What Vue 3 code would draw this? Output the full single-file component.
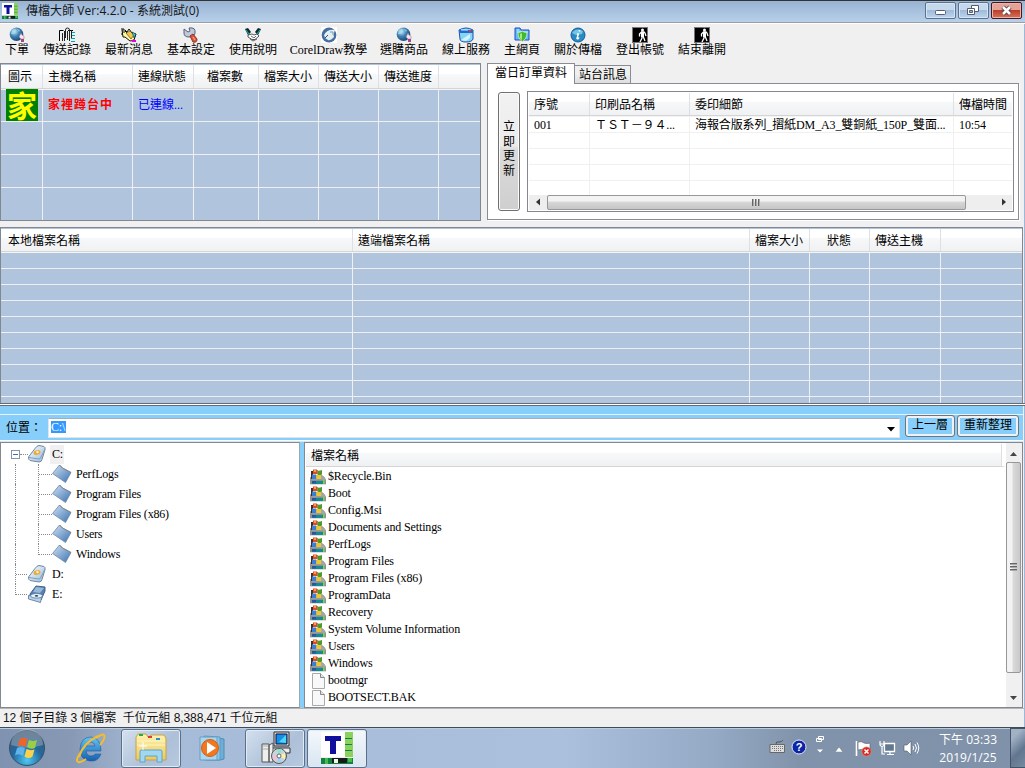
<script setup>
const tools = [
  ['下單', 'globe', 24], ['傳送記錄', 'clip', 48], ['最新消息', 'news', 48], ['基本設定', 'wrench', 48],
  ['使用說明', 'hands', 48], ['CorelDraw教學', 'corel', 75], ['選購商品', 'globe', 48], ['線上服務', 'bucket', 48],
  ['主網頁', 'shield', 36], ['關於傳檔', 'info', 48], ['登出帳號', 'exit', 48], ['結束離開', 'exit', 48]
]
const hostHeads = ['圖示', '主機名稱', '連線狀態', '檔案數', '檔案大小', '傳送大小', '傳送進度', '']
const orderHeads = ['序號', '印刷品名稱', '委印細節', '傳檔時間']
const orderRow = ['001', 'ＴＳＴ－９４...', '海報合版系列_摺紙DM_A3_雙銅紙_150P_雙面...', '10:54']
const queueHeads = ['本地檔案名稱', '遠端檔案名稱', '檔案大小', '狀態', '傳送主機', '']
const folders = ['PerfLogs', 'Program Files', 'Program Files (x86)', 'Users', 'Windows']
const files = ['$Recycle.Bin', 'Boot', 'Config.Msi', 'Documents and Settings', 'PerfLogs', 'Program Files',
  'Program Files (x86)', 'ProgramData', 'Recovery', 'System Volume Information', 'Users', 'Windows', 'bootmgr', 'BOOTSECT.BAK']
</script>

<template>
  <div class="win">
    <svg class="defs" width="0" height="0">
      <defs>
        <radialGradient id="gGlobe" cx=".35" cy=".3" r=".8"><stop offset="0" stop-color="#c9ecfa" /><stop offset=".45" stop-color="#3f82b4" /><stop offset="1" stop-color="#123a68" /></radialGradient>
        <linearGradient id="gFolder" x1="0" y1="0" x2="1" y2="1"><stop offset="0" stop-color="#d3e2f2" /><stop offset="1" stop-color="#3a72b2" /></linearGradient>
        <linearGradient id="gDrive" x1="0" y1="0" x2="1" y2="1"><stop offset="0" stop-color="#ffffff" /><stop offset="1" stop-color="#93bbdf" /></linearGradient>
        <radialGradient id="gOrb" cx=".5" cy=".85" r=".85"><stop offset="0" stop-color="#4cc8f2" /><stop offset=".5" stop-color="#23689c" /><stop offset="1" stop-color="#46586e" /></radialGradient>
        <linearGradient id="gIe" x1="0" y1="0" x2="0" y2="1"><stop offset="0" stop-color="#63c4f4" /><stop offset="1" stop-color="#155faf" /></linearGradient>
        <linearGradient id="gYellow" x1="0" y1="0" x2="0" y2="1"><stop offset="0" stop-color="#fff3b0" /><stop offset="1" stop-color="#e9c964" /></linearGradient>
      </defs>
      <symbol id="globe" viewBox="0 0 16 16"><circle cx="7.500" cy="7.300" r="6.800" fill="url(#gGlobe)" /><path d="M3 3l3-1 1 2-2 3-3 0zM8 2l3 1-1 2z" fill="#a7dced" opacity=".7" /><path d="M11 8l1-2 1 2 2 1 0 3-3 0-2-2z" fill="#f7e7ed" stroke="#8a6b94" stroke-width=".5" /><path d="M12 12h3v3h-3z" fill="#a0487f" /></symbol>
      <symbol id="clip" viewBox="0 0 16 16"><path d="M.5 14V3.500h4M9 3.500h5" stroke="#000" fill="none" /><path d="M12 5.500h4M12 8.500h4M12 11.500h4M12 14.500h4" stroke="#00a6b8" /><path d="M3.500 14V6M10.500 14V3q0-2-2-2t-2 2v8M5.500 14V4M8.500 4v9M12.500 3v8" stroke="#222" fill="none" /></symbol>
      <symbol id="news" viewBox="0 0 16 16"><path d="M1 3h3l2 2 2-3 3 4 4 1-2 6-4 1-5-4-2 0z" fill="#fff9a0" stroke="#111" /><path d="M0 2h3M1 5h3M0 7h2M4 4l6 6" stroke="#111" /><path d="M5 6l4-2 4 4-3 4z" fill="#f9c44b" stroke="#333" stroke-width=".6" /><path d="M11 5l4 2-2 4z" fill="#21ddd9" stroke="#111" stroke-width=".5" /><path d="M10 13h5v2h-4z" fill="#e300dc" /></symbol>
      <symbol id="wrench" viewBox="0 0 16 16"><path d="M1 2l4 3 2-1-1-3q7-1 6 5 0 2-2 3l-4 1Q1 10 1 6z" fill="#bfc9da" stroke="#545e7b" /><path d="M7 9l3-2 4 5q0 4-4 3z" fill="#d95a38" stroke="#902d23" /><path d="M10 10l2 3" stroke="#ffb398" /></symbol>
      <symbol id="hands" viewBox="0 0 16 16"><path d="M0 2l3-1 3 4-3 3zM16 2l-3-1-3 4 3 3z" fill="#172326" /><path d="M1 3l3 4M15 3l-3 4" stroke="#00b0b0" stroke-width="1.200" /><path d="M3 8l4-1 2 1 3-1 2 2-4 3.500H7L3 10z" fill="#fff" stroke="#111" stroke-width=".7" /><path d="M6 9l3 2 2-2M5 12l3 2 4-2" stroke="#444" stroke-width=".8" fill="none" /></symbol>
      <symbol id="corel" viewBox="0 0 16 16"><rect width="16" height="16" fill="#fff" /><circle cx="8" cy="8" r="7.400" fill="#456e9e" /><path d="M3 8Q6 2 14 3q-2 5-1 7-4 4-6 3l-3-2z" fill="#e4eff3" /><path d="M9 5h3v3" stroke="#7899b5" fill="none" /><path d="M4 11l3-3" stroke="#274f80" fill="none" /></symbol>
      <symbol id="bucket" viewBox="0 0 16 16"><path d="M1 3q7-4 14 0v9q-1 3-7 3-6 0-6-3z" fill="#86d6f2" stroke="#1b50b7" /><path d="M1 3h14v3H2z" fill="#1f6ad0" /><path d="M3 3h7" stroke="#bceeff" /><path d="M10 3l4 0-2 3z" fill="#b34b47" /><path d="M3 13L12 7v4l-4 3z" fill="#e3fbff" opacity=".8" /></symbol>
      <symbol id="shield" viewBox="0 0 16 16"><path d="M1 1h5l1 2h8v10H1z" fill="#60bdf8" stroke="#1b4bc7" /><path d="M3 3h2M3 5h11" stroke="#cdf4ff" /><path d="M4 5.500q4-.5 4-1.500 2 1.500 5 1.500 0 6-4.500 9Q4 12 4 5.500z" fill="#40ba2d" stroke="#cfe9d0" stroke-width=".8" /><path d="M6 7v4l2 2V6z" fill="#a9ea78" /></symbol>
      <symbol id="info" viewBox="0 0 16 16"><circle cx="8" cy="8" r="7" fill="#288bc2" stroke="#1559a2" /><path d="M2 6Q6 0 13 4l-1 3-6 1z" fill="#73c6e3" /><path d="M8.500 6.500l-1.500 5q1 1 2-1M7 7h1.500M9.500 3v1.500" stroke="#fff" stroke-width="1.500" fill="none" /></symbol>
      <symbol id="exit" viewBox="0 0 16 16"><rect x=".5" y=".5" width="15" height="15" fill="#000" stroke="#777" /><circle cx="10.500" cy="3" r="1.500" fill="#fff" /><path d="M9 5h3l1 1 1 3M9.500 5l-2 2v2.500M10 9v2l-2 4M11 9l2 5" fill="none" stroke="#fff" stroke-width="1.300" /><path d="M9 5h3v5H9z" fill="#fff" /></symbol>
      <symbol id="tlogo" viewBox="0 0 32 32"><rect width="32" height="32" fill="#138044" /><rect y="0" width="24" height="25" fill="#fff" /><path d="M24 0h8v25h-8z" fill="#8bd15e" /><path d="M24 6.500h7M24 12.500h7M24 18.500h7" stroke="#138044" /><path d="M4 4h16v5h-5v13H9V9H4z" fill="#10109c" /><path d="M0 25h32v1H0z" fill="#eee" /><path d="M4 26h3v6H4zM27 26h4v4h-4z" fill="#46bb4c" /><path d="M11 26h15v5H11z" fill="#151b18" /><path d="M13 27h4v4h-4z" fill="#f4f7e8" /></symbol>
      <symbol id="folder" viewBox="0 0 20 20"><path d="M.5 9.500L7.500 1l3 3 8.500 4.500-5.500 10z" fill="url(#gFolder)" stroke="#6a86a5" stroke-width=".8" /><path d="M7.500 1l3 3 8.500 4.500" stroke="#7d8790" fill="none" /></symbol>
      <symbol id="drive" viewBox="0 0 18 18"><path d="M.5 12L7 3.500Q9 .5 11 .5l5 1q1.500.5 1 3l-3 10q-.5 2.500-3 2.500L2 15.500Q.5 15 .5 12z" fill="url(#gDrive)" stroke="#74879d" /><path d="M1 12.500l10 1.500q1.500 0 2-2l4-8" stroke="#7d9fbe" fill="none" /><ellipse cx="9" cy="7.500" rx="3.600" ry="2.400" fill="#edaa3c" transform="rotate(-15 9 7.500)" /><circle cx="9.500" cy="7" r="1.200" fill="#fff5d0" /></symbol>
      <symbol id="cd" viewBox="0 0 18 18"><path d="M2 9L8 1l9 1v4l-4 9-11-3z" fill="#587fae" stroke="#3e638e" /><path d="M8 2l8 1-4 5-7-1z" fill="#98b9d8" /><path d="M.5 10.500l13 2-1 5-12-3.500z" fill="#b9d3e8" stroke="#557599" stroke-width=".8" /><ellipse cx="8.500" cy="10.800" rx="6" ry="2.300" fill="#e6f2f9" stroke="#587b9f" stroke-width=".8" /><ellipse cx="8.500" cy="10.800" rx="1.800" ry=".9" fill="#24486e" /></symbol>
      <symbol id="windir" viewBox="0 0 16 16"><path d="M0 11V9q2-3 8-3 5 0 6 2l2 3v4H0z" fill="#a5a9a8" stroke="#777" stroke-width=".5" /><path d="M1 2h2v8H1zM6 1h1.500v4H6z" fill="#333" /><path d="M3 .5h4V5H3z" fill="#e8481a" /><path d="M4 1h2v2H4z" fill="#ff9a55" /><path d="M7.500 1.500q2 .5 4.500-.5v4.500q-2.500 1-4.500 0z" fill="#4f9a2b" /><path d="M2 5.500h4V10H2z" fill="#3a7fd2" /><path d="M6.500 6H11v4H6.500z" fill="#efc62b" /><path d="M0 10.500h12l4 1V15H0z" fill="#8d9191" /><path d="M2 12h11v3H2z" fill="#178b95" /><path d="M2 12h4v2.500H2z" fill="#2a56a0" /><path d="M13 11h1.500v4H13z" fill="#7fd63c" /></symbol>
      <symbol id="file" viewBox="0 0 16 16"><path d="M2.500.5h8l4 4v11h-12z" fill="#f8f8f8" stroke="#aaa" /><path d="M10.500.5v4h4" fill="#e4e4e4" stroke="#888" /></symbol>
    </svg>

    <header class="title">
      <svg class="s16"><use href="#tlogo" /></svg>
      <span class="caption">傳檔大師 Ver:4.2.0 - 系統測試(0)</span>
      <div class="ctrls">
        <b><svg viewBox="0 0 29 15"><rect x="9.500" y="7.500" width="10" height="4" rx="1" fill="#fff" stroke="#555d70" /></svg></b>
        <b><svg viewBox="0 0 29 15"><path d="M12.500 2.500h7v6h-7z" fill="#fff" stroke="#555d70" /><path d="M8.500 5.500h7v6h-7z" fill="#fff" stroke="#555d70" /><path d="M10.500 7.500h3v2h-3z" fill="#9bb" stroke="#555d70" /></svg></b>
        <b class="close"><svg viewBox="0 0 29 15"><path d="M11 4l7 7M18 4l-7 7" stroke="#53454f" stroke-width="4.500" /><path d="M11 4l7 7M18 4l-7 7" stroke="#fff" stroke-width="2.500" /></svg></b>
      </div>
    </header>

    <nav class="tools">
      <div v-for="(t, i) in tools" :key="i" class="tool" :style="{ width: t[2] + 'px' }">
        <svg class="s16"><use :href="'#' + t[1]" /></svg><span>{{ t[0] }}</span>
      </div>
    </nav>

    <section class="top">
      <div class="hosts">
        <div class="head hostgrid"><span v-for="(h, i) in hostHeads" :key="i">{{ h }}</span></div>
        <div v-for="r in 4" :key="r" class="hrow hostgrid">
          <template v-if="r === 1"><span class="pic"><i>家</i></span><span class="hname">家裡蹲台中</span><span class="hstat">已連線...</span><span v-for="n in 5" :key="n"></span></template>
          <template v-else><span v-for="n in 8" :key="n"></span></template>
        </div>
      </div>

      <div class="tabs">
        <div class="tabbar"><span class="tab on">當日訂單資料</span><span class="tab">站台訊息</span></div>
        <div class="panel">
          <button class="refresh"><span v-for="c in '立即更新'" :key="c">{{ c }}</span></button>
          <div class="orders">
            <div class="head ogrid"><span v-for="h in orderHeads" :key="h">{{ h }}</span></div>
            <div v-for="r in 5" :key="r" class="orow ogrid"><span v-for="(c, i) in orderRow" :key="i">{{ r === 1 ? c : '' }}</span></div>
            <div class="hscroll"><svg width="18" height="14"><path d="M11 3.500v7L7 7z" fill="#333" /></svg><div class="hthumb"><i class="grip"></i></div><svg width="18" height="14"><path d="M6 3.500v7L10 7z" fill="#333" /></svg></div>
          </div>
        </div>
      </div>
    </section>

    <section class="queue">
      <div class="head qgrid"><span v-for="(h, i) in queueHeads" :key="i">{{ h }}</span></div>
      <div v-for="r in 10" :key="r" class="qrow qgrid"><span v-for="n in 6" :key="n"></span></div>
    </section>
    <div class="splitter"></div>

    <section class="addr">
      <label>位置：</label>
      <div class="combo"><span class="sel">C:\</span><svg width="8" height="5"><path d="M0 0h8L4 4.500z" /></svg></div>
      <button class="abtn up"><span>上一層</span></button>
      <button class="abtn re"><span>重新整理</span></button>
    </section>

    <section class="browse">
      <div class="tree">
        <div class="node root"><i class="box"></i><i class="dots"></i><svg class="dr"><use href="#drive" /></svg><span class="cur">C:</span></div>
        <div v-for="(f, i) in folders" :key="f" class="node kid" :class="{ last: i === 4 }"><i class="trunk"></i><i class="branch"></i><svg class="fo"><use href="#folder" /></svg><span>{{ f }}</span></div>
        <div class="node drv"><i class="branch"></i><svg class="dr"><use href="#drive" /></svg><span>D:</span></div>
        <div class="node drv last"><i class="branch"></i><svg class="dr"><use href="#cd" /></svg><span>E:</span></div>
      </div>
      <div class="list">
        <div class="lmain">
          <div class="head lhead"><span>檔案名稱</span></div>
          <div v-for="(f, i) in files" :key="f" class="frow"><svg class="s16"><use :href="i < 12 ? '#windir' : '#file'" /></svg><span>{{ f }}</span></div>
        </div>
        <div class="vscroll"><svg width="15" height="17"><path d="M4 11h7L7.500 7z" fill="#444" /></svg><div class="vthumb"><i class="vgrip"></i></div><svg class="dn" width="15" height="17"><path d="M4 7h7l-3.500 4z" fill="#444" /></svg></div>
      </div>
    </section>

    <footer class="status">12 個子目錄 3 個檔案&nbsp; 千位元組 8,388,471 千位元組</footer>

    <div class="taskbar">
      <div class="slot orb"><svg width="38" height="38" viewBox="0 0 38 38"><circle cx="19" cy="19" r="17.500" fill="url(#gOrb)" stroke="#31516d" /><path d="M3 16a16 16 0 0132 0q-16 5-32 0z" fill="#fff" opacity=".25" /><path d="M11.500 10.500q4-3 8-.5l-2 8q-4-2.500-8-.5z" fill="#f0642c" /><path d="M21 11q4 2 8 0l-2 8q-4 2-8-1z" fill="#9bcf43" /><path d="M9 19q4-2 8 0l-2 8q-4-3-8-.5z" fill="#5fb4ec" /><path d="M18.500 20q4 2 8 .500l-2 7q-4 3-8 0z" fill="#fbd24a" /></svg></div>
      <div class="slot ie"><svg width="32" height="32" viewBox="0 0 32 32"><path d="M27 19H12q1 5 5 5 3 0 4-2h6q-3 8-11 7Q6 28 6 17 7 5 17 5q10 1 10 14zM12 14h9q-1-4-4-4-4 0-5 4z" fill="url(#gIe)" stroke="#1c5c9d" stroke-width=".6" fill-rule="evenodd" /><path d="M22 6q7-5 8-3 2 3-4 10M7 20q-6 8-3 10 2 1 8-3M5 25Q9 11 24 4" stroke="#f3bd2f" stroke-width="2" fill="none" /></svg></div>
      <div class="slot on"><svg width="34" height="34" viewBox="0 0 34 34"><path d="M2 6l2-3h8l2 3h2l1-2h13l2 3v22H2z" fill="url(#gYellow)" stroke="#c8a343" /><path d="M3 10h28M3 14h28" stroke="#fff5bf" /><path d="M5 3h4v2H5z" fill="#26a84c" /><path d="M14 5h4v2h-4z" fill="#d64034" /><path d="M22 7h4v2h-4z" fill="#338bd5" /><path d="M6 31V20q0-1 2-1h18q2 0 2 1v11h-5v-6H11v6z" fill="#a2d7ef" stroke="#5aa4cc" /><path d="M9 11v8M5 15h8" stroke="#fff" /></svg></div>
      <div class="slot wmp"><svg width="30" height="30" viewBox="0 0 30 30"><path d="M9 4l17 2v20l-4 1H9z" fill="#70afd5" stroke="#4e8cb7" /><path d="M6 3l16 1v23H6z" fill="#8cc7e9" stroke="#5a9ac5" /><path d="M2 4h17v23H2z" fill="#a8d7ef" stroke="#669fc6" /><circle cx="12" cy="15" r="8.500" fill="#ef7821" stroke="#d85c12" /><path d="M9 9l9 6-9 6z" fill="#fff" /></svg></div>
      <div class="slot on inst"><svg width="34" height="34" viewBox="0 0 34 34"><path d="M16 1h15v14H16z" fill="#dadada" stroke="#333" /><path d="M18 3h11v10H18z" fill="#168ee5" stroke="#114" /><path d="M21 11l7-7v8z" fill="#49d8f5" /><path d="M12 17h20v5H12z" fill="#ececec" stroke="#333" /><path d="M4 13h7v18H4zM11 14l4-2v19h-4z" fill="#eee" stroke="#555" /><path d="M5 15h5M5 18h5" stroke="#aaa" /><circle cx="21" cy="25" r="7.500" fill="#c8d5da" stroke="#555" /><path d="M21 25l-2-7h5z" fill="#8ae4c8" /><path d="M21 25l6-3v6z" fill="#fff3a0" /><path d="M21 25l-5 5-1-6z" fill="#f7bdd7" /><path d="M21 25l3 6h-5z" fill="#9ecfff" /><circle cx="21" cy="25" r="2" fill="#fff" stroke="#666" /></svg></div>
      <div class="slot on app"><svg width="32" height="32"><use href="#tlogo" /></svg></div>
      <div class="tray">
        <svg class="kb" width="16" height="15" viewBox="0 0 16 15"><path d="M1 5.500h14.500v8H1z" fill="#ddd" stroke="#686868" /><path d="M3 7.500h11M3 9.500h11M5 11.500h7" stroke="#777" stroke-dasharray="1 1" /><path d="M7 5q0-3 3-2 3 0 4-2" fill="none" stroke="#555" /></svg>
        <svg class="help" width="16" height="16" viewBox="0 0 16 16"><circle cx="8" cy="8" r="7" fill="#0b24a8" stroke="#dfe5f5" /><text x="8" y="12" text-anchor="middle" fill="#fff" font-size="11" font-weight="700">?</text></svg>
        <svg class="mini" width="9" height="18" viewBox="0 0 9 18"><path d="M2.500.5h5v3h-5zM.5 2.500h5v3h-5z" fill="#8194aa" stroke="#fff" /><path d="M1 13.500h6l-3 3z" fill="#fff" /></svg>
        <svg class="arr" width="8" height="5"><path d="M0 5h8L4 0z" fill="#fff" stroke="#546478" stroke-width=".4" /></svg>
        <svg class="flag" width="17" height="17" viewBox="0 0 17 17"><path d="M1.500 1v15" stroke="#fff" stroke-width="1.600" /><path d="M3 2q4-1 6 1 3 1 6 0v7q-4 1-6 0-3-1-6 0z" fill="#fff" stroke="#556" stroke-width=".6" /><circle cx="11.500" cy="11.500" r="4.600" fill="#d62b20" stroke="#e98880" stroke-width=".6" /><path d="M9.500 9.500l4 4M13.500 9.500l-4 4" stroke="#fff" stroke-width="1.500" /></svg>
        <svg class="net" width="17" height="16" viewBox="0 0 17 16"><path d="M5.500 3.500h10v8h-10z" fill="#61788f" stroke="#fff" stroke-width="1.300" /><path d="M8 14.500h7M11 12v2M3 7v7h3M1 1v4q2 3 4 0V1M1 4h4" stroke="#fff" stroke-width="1.200" fill="none" /></svg>
        <svg class="vol" width="17" height="16" viewBox="0 0 17 16"><path d="M1 5h3l4-4v14l-4-4H1z" fill="#fff" stroke="#4c5c70" stroke-width=".6" /><path d="M10 6q1.500 2 0 4M12 4q3 4 0 8M14 2.500q3.500 5.500 0 11" stroke="#fff" fill="none" /></svg>
        <div class="clock"><span>下午 03:33</span><span>2019/1/25</span></div>
      </div>
      <div class="desk"></div>
    </div>
  </div>
</template>

<style>
body { margin: 0; overflow: hidden; }
</style>

<style scoped>
* { box-sizing: border-box; }
.win { width: 1025px; height: 768px; background: #f0f0f0; font: 12px/14px "Liberation Serif", "Noto Sans CJK TC", serif; color: #000; display: flex; flex-direction: column; overflow: hidden; white-space: pre; box-shadow: inset -1px 0 #9db8d6; }
.defs { position: absolute; }
svg { display: block; flex: none; }
.s16 { width: 16px; height: 16px; }
.title { flex: none; height: 24px; background: linear-gradient(#98b4d3, #b9d1ea); border-top: 1px solid #333; border-bottom: 1px solid #fff; box-shadow: inset 0 -1px #9a9fa7; display: flex; align-items: center; padding: 0 3px 2px 2px; }
.caption { font: 12px/16px "Open Sans", "Noto Sans CJK TC", sans-serif; margin-left: 8px; color: #15181c; flex: 1; letter-spacing: .05px; }
.ctrls { display: flex; gap: 2px; align-self: flex-start; padding-top: 1px; }
.ctrls b { width: 31px; height: 17px; border: 1px solid #5b7190; border-radius: 2px; background: linear-gradient(#c5d8ec 45%, #9fbbda 50%, #bed5ee); box-shadow: inset 0 0 0 1px #d6e5f4; }
.ctrls svg { width: 29px; height: 15px; }
.ctrls .close { border-color: #4b1420; background: linear-gradient(#e4a396 45%, #bd3f29 50%, #d4735c); box-shadow: inset 0 0 0 1px #eab5aa; }
.tools { flex: none; height: 39px; display: flex; gap: 14px; padding: 3px 0 0 5px; }
.tool { display: flex; flex-direction: column; align-items: center; line-height: 14px; }
.top { flex: none; height: 164px; display: flex; gap: 6px; }
.hosts { width: 481px; height: 158px; border: 1px solid #828790; background: #b0c4de; padding-top: 1px; overflow: hidden; }
.head { background: linear-gradient(#fff 38%, #f7f8fa 42%, #f0f1f3); border-bottom: 1px solid #d5d5d5; box-shadow: 0 1px #f4f4f4; }
.head span { border-right: 1px solid #dfe0e3; line-height: 25px; padding-left: 6px; }
.hostgrid { display: grid; grid-template-columns: 42px 90px 61px 65px 60px 60px 60px 1fr; }
.hosts .head { height: 24px; }
.hosts .head span { height: 23px; padding-left: 5px; }
.hosts .head span:nth-child(1) { padding-left: 7px; }
.hosts .head span:nth-child(4) { padding-left: 13px; }
.hosts .head span:last-child, .queue .head span:last-child, .orders .head span:last-child { border: 0; }
.hrow { height: 33px; border-bottom: 1px solid #f0f0f0; }
.hrow:last-child { border: 0; }
.hrow span { border-right: 1px solid #f0f0f0; line-height: 32px; padding-left: 5px; }
.hrow span:last-child, .qrow span:last-child, .orow span:last-child { border-right: 0; }
.hrow .hname { color: #f00; font-weight: 700; letter-spacing: 1px; }
.hrow .hstat { color: #00f; }
.pic i { display: block; width: 32px; height: 32px; background: #008000; color: #ff0; font: 700 30px/31px "Noto Sans CJK TC", sans-serif; text-align: center; }
.tabs { width: 532px; display: flex; flex-direction: column; }
.tabbar { height: 20px; display: flex; align-items: flex-end; }
.tab { height: 18px; border: 1px solid #898c95; border-left: 0; border-bottom: 0; background: linear-gradient(#f0f0f0 45%, #ddd); padding: 0 4px; line-height: 18px; width: 56px; }
.tab.on { height: 21px; margin-bottom: -1px; width: 88px; border-left: 1px solid #898c95; background: #fff; padding-left: 7px; line-height: 18px; z-index: 1; position: relative; }
.panel { height: 137px; border: 1px solid #898c95; background: #fff; box-shadow: 1px 1px #fff; padding: 7px 4px 7px 10px; display: flex; gap: 7px; }
.refresh { width: 22px; height: 119px; margin-top: 1px; border: 1px solid #707070; border-radius: 3px; background: linear-gradient(#f2f2f2, #ebebeb 45%, #dbdbdb 48%, #cfcfcf); box-shadow: inset 0 0 0 1px #fafafa; padding: 0 0 5px; font: inherit; line-height: 14.500px; display: flex; flex-direction: column; align-items: center; justify-content: center; }
.orders { flex: 1; height: 121px; border: 1px solid #828790; padding: 1px; overflow: hidden; }
.ogrid { display: grid; grid-template-columns: 61px 100px 264px 1fr; }
.orders .head { height: 23px; }
.orders .head span { height: 22px; }
.orders .head span, .orow span { padding-left: 5px; }
.orow { height: 16px; border-bottom: 1px solid #f0f0f0; }
.orow:nth-child(2) { height: 17px; }
.orow:nth-child(6) { height: 14px; border: 0; }
.orow span { border-right: 1px solid #f0f0f0; line-height: 18px; height: 16px; letter-spacing: -.11px; }
.orow:nth-child(6) span { height: 14px; }
.hscroll { height: 15px; background: #eee; display: flex; }
.hthumb { flex: none; width: 419px; margin-right: 30px; height: 15px; border: 1px solid #979797; border-radius: 2px; background: linear-gradient(#f3f3f3 40%, #d8d8d8 45%, #c5c5c5); display: flex; align-items: center; justify-content: center; }
.grip { width: 9px; height: 7px; background: repeating-linear-gradient(90deg, #666 0 1px, #aaa 1px 2px, transparent 2px 3px); }
.queue { flex: none; height: 176px; width: 1023px; border: 1px solid #828790; border-bottom: 0; background: #b0c4de; padding-top: 1px; overflow: hidden; }
.queue .head { height: 23px; margin-bottom: 1px; }
.queue .head span { height: 22px; padding-left: 7px; }
.qgrid { display: grid; grid-template-columns: 352px 397px 60px 60px 71px 1fr; }
.queue .head span:nth-child(n+2) { padding-left: 5px; }
.queue .head span:nth-child(4) { padding-left: 17px; }
.qrow { height: 16px; border-bottom: 1px solid #f0f0f0; }
.qrow:last-child { border: 0; height: 8px; }
.qrow span { border-right: 1px solid #f0f0f0; }
.splitter { flex: none; height: 3px; background: #fff; border-top: 1px solid #646b75; border-bottom: 1px solid #646b75; }
.addr { flex: none; width: 1023px; height: 36px; background: #87cefa; display: flex; padding: 8px 4px 0 6px; border-bottom: 1px solid #cfe9fa; background-image: linear-gradient(#e3f4ff, #e3f4ff), linear-gradient(#fff, #fff); background-size: 100% 1px, 100% 1px; background-repeat: no-repeat; background-position: 0 8px, 0 34px; }
.addr label { width: 42px; line-height: 28px; }
.combo { width: 852px; height: 20px; margin-top: 4px; background: #fff; border: 1px solid #e1e5e8; border-top-color: #abadb3; display: flex; justify-content: space-between; padding: 2px 4px 0 2px; }
.combo svg { margin-top: 6px; }
.sel { background: #3399ff; color: #fff; height: 12px; line-height: 12px; width: 15px; letter-spacing: -.2px; }
.abtn { border: 1px solid #6e7780; border-radius: 3px; background: #87cefa; box-shadow: inset 0 0 0 2px #f1f1f1; height: 22px; margin-top: 1px; padding: 0; font: inherit; line-height: 18px; display: flex; justify-content: center; }
.up { width: 50px; margin-left: 5px; }
.re { width: 62px; margin-left: 2px; }
.browse { flex: none; width: 1023px; height: 266px; background: #87cefa; display: flex; gap: 4px; }
.tree { width: 300px; border: 1px solid #828790; border-right-color: #9aa; background: #fff; padding-top: 1px; }
.node { height: 20px; display: flex; align-items: center; }
.tree .node span { line-height: 18px; letter-spacing: -.2px; }
.root { padding-left: 10px; }
.box { width: 9px; height: 9px; border: 1px solid #8795a5; background: linear-gradient(#356fbe, #356fbe) center / 5px 1px no-repeat #fff; }
.dots { width: 8px; border-top: 1px dotted #888; }
.dr { width: 18px; height: 18px; }
.tree .root span { margin-left: 4px; background: #f0f0f0; height: 19px; padding: 0 1px 0 2px; }
.kid, .drv { padding-left: 14px; }
.trunk { width: 23px; height: 20px; border-left: 1px dotted #888; }
.branch { width: 13px; height: 20px; border-left: 1px dotted #888; background: linear-gradient(90deg, #888 50%, transparent 0) 0 10px / 2px 1px repeat-x; }
.kid .branch { width: 14px; }
.kid.last .branch, .drv.last .branch { height: 11px; align-self: flex-start; }
.fo { width: 20px; height: 20px; }
.kid span { margin-left: 4px; }
.drv span { margin-left: 6px; }
.list { width: 719px; border: 1px solid #828790; background: #fff; display: flex; }
.lmain { flex: 1; padding: 1px 0 0 1px; overflow: hidden; }
.lhead { height: 23px; margin-bottom: 1px; box-shadow: none; border-right: 4px solid #fff; }
.lhead span { display: block; padding-left: 5px; height: 22px; }
.frow { height: 17px; display: flex; align-items: center; padding-left: 4px; gap: 2px; }
.frow span { line-height: 16px; margin-bottom: 2px; letter-spacing: -.14px; }
.vscroll { width: 16px; padding: 2px 1px 1px 0; background: #f0f0f0; display: flex; flex-direction: column; }
.vthumb { height: 211px; width: 15px; border: 1px solid #979797; border-radius: 2px; background: linear-gradient(90deg, #f3f3f3 40%, #dadada 45%, #c9c9c9); display: flex; align-items: center; justify-content: center; }
.vgrip { width: 7px; height: 9px; background: repeating-linear-gradient(#666 0 1px, #aaa 1px 2px, transparent 2px 3px); }
.dn { margin-top: auto; }
.status { flex: none; height: 19px; width: 1024px; font: 12px/19px "Liberation Sans", "Noto Sans CJK TC", sans-serif; padding-left: 3px; color: #111; border-top: 1px solid #b5b5b5; letter-spacing: -.07px; }
.taskbar { flex: none; height: 41px; background: linear-gradient(90deg, #7f92af, #8799b4 7%, #a6bbd8 14%, #aac0dd 55%, #93a9c4 70%, #8193aa 78%, #8092a9); border-top: 1px solid #3e4b5b; box-shadow: inset 0 1px #bccbdc; display: flex; align-items: center; }
.slot { width: 60px; height: 39px; display: flex; align-items: center; justify-content: center; }
.orb { width: 54px; }
.ie { margin: 0 1px 0 6px; }
.slot.on { border: 1px solid #5c6f88; border-radius: 3px; box-shadow: inset 0 0 0 1px #e0ebf6; background: linear-gradient(135deg, #d3e0ee, #adc0d8 60%, #b6c9df); }
.wmp { width: 64px; }
.app { margin-left: 2px; }
.slot.app { background: linear-gradient(#f4f8fc, #d9e5f1); }
.tray { margin-left: auto; display: flex; align-items: center; }
.kb { margin: -4px 6px 0 0; }
.help { margin: -3px 9px 0 0; font-family: "Liberation Sans", sans-serif; }
.mini { margin: -6px 10px 0 0; }
.arr { margin: 3px 12px 0 0; }
.flag { margin-right: 7px; }
.net { margin-right: 7px; }
.vol { margin-right: 16px; }
.clock { width: 64px; margin-right: 10px; font: 12px/18px "Open Sans", "Noto Sans CJK TC", sans-serif; color: #fff; display: flex; flex-direction: column; align-items: center; padding-top: 2px; letter-spacing: .05px; }
.desk { width: 15px; height: 40px; border: 1px solid #43536a; border-right: 0; background: linear-gradient(135deg, #a1b2c5 20%, #62768f 60%, #7589a0); }
</style>
